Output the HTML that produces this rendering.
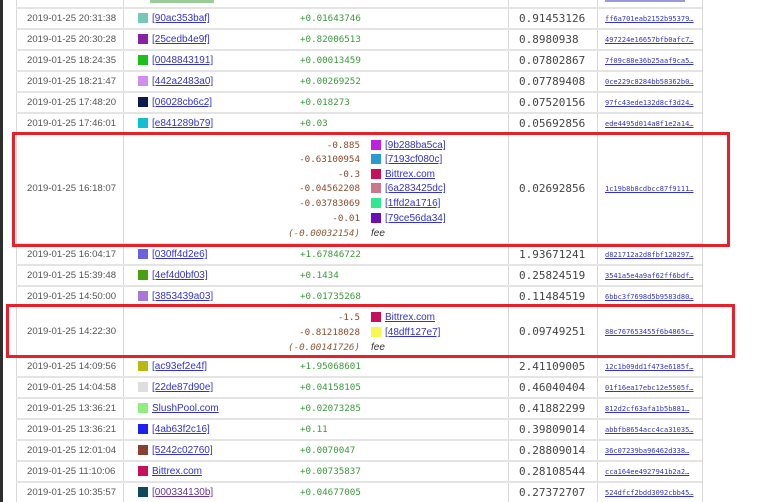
<!DOCTYPE html>
<html><head><meta charset="utf-8"><style>
*{margin:0;padding:0;box-sizing:border-box}
body{width:768px;height:502px;overflow:hidden;background:#fff;position:relative;font-family:"Liberation Sans",sans-serif}
.strip{position:absolute;left:0;top:0;width:3px;height:502px;background:#2e2e2e}
.v{position:absolute;top:0;height:502px;width:1px;background:#d8d8d8}
.h{position:absolute;left:16px;width:686px;height:2px;background:#e4e4e4}
.t{position:absolute;left:27px;font-size:9.6px;color:#555;line-height:12px}
.sq{position:absolute;width:10px;height:10px}
.a{position:absolute;font-size:10px;text-decoration:underline;line-height:12px;color:#33c}
.g{position:absolute;left:300px;font-family:"DejaVu Sans Mono","Liberation Mono",monospace;font-size:9.2px;color:#3a9a3a;line-height:12px}
.r{position:absolute;right:408px;font-family:"DejaVu Sans Mono","Liberation Mono",monospace;font-size:9.2px;color:#8b4a2a;line-height:12px;text-align:right}
.fee{position:absolute;left:371px;font-size:10px;font-style:italic;color:#333;line-height:12px}
.b{position:absolute;left:519px;font-family:"DejaVu Sans Mono","Liberation Mono",monospace;font-size:11px;color:#444;line-height:12px}
.hs{position:absolute;left:605px;font-family:"DejaVu Sans Mono","Liberation Mono",monospace;font-size:7px;color:#33c;text-decoration:underline;line-height:10px}
.red{position:absolute;border:3px solid #e8202a}
</style></head><body>
<div class="strip"></div>
<div class="v" style="left:16px"></div>
<div class="v" style="left:123px"></div>
<div class="v" style="left:508px"></div>
<div class="v" style="left:597px"></div>
<div class="v" style="left:702px"></div>
<div style="position:absolute;left:150px;top:0;width:64px;height:3px;background:#9c9"></div>
<div style="position:absolute;left:605px;top:0;width:80px;height:2px;background:#99d"></div>

<div class="h" style="top:7px"></div><div class="h" style="top:28px"></div><div class="h" style="top:49px"></div><div class="h" style="top:70px"></div><div class="h" style="top:91px"></div><div class="h" style="top:112px"></div><div class="h" style="top:133px"></div><div class="h" style="top:243px"></div><div class="h" style="top:264px"></div><div class="h" style="top:285px"></div><div class="h" style="top:305px"></div><div class="h" style="top:355px"></div><div class="h" style="top:376px"></div><div class="h" style="top:397px"></div><div class="h" style="top:418px"></div><div class="h" style="top:439px"></div><div class="h" style="top:460px"></div><div class="h" style="top:481px"></div>

<div class="t" style="top:13px">2019-01-25 20:31:38</div><div class="sq" style="left:138px;top:13px;background:#74c9b8"></div><div class="a" style="left:152px;top:13px">[90ac353baf]</div><div class="g" style="top:13px">+0.01643746</div><div class="b" style="top:13px">0.91453126</div><div class="hs" style="top:14px">ff6a701eab2152b95379…</div>
<div class="t" style="top:34px">2019-01-25 20:30:28</div><div class="sq" style="left:138px;top:34px;background:#8a1fa8"></div><div class="a" style="left:152px;top:34px">[25cedb4e9f]</div><div class="g" style="top:34px">+0.82006513</div><div class="b" style="top:34px">0.8980938</div><div class="hs" style="top:35px">497224e16657bfb0afc7…</div>
<div class="t" style="top:55px">2019-01-25 18:24:35</div><div class="sq" style="left:138px;top:55px;background:#1cc01c"></div><div class="a" style="left:152px;top:55px">[0048843191]</div><div class="g" style="top:55px">+0.00013459</div><div class="b" style="top:55px">0.07802867</div><div class="hs" style="top:56px">7f09c88e36b25aaf9ca5…</div>
<div class="t" style="top:76px">2019-01-25 18:21:47</div><div class="sq" style="left:138px;top:76px;background:#cf8ef0"></div><div class="a" style="left:152px;top:76px">[442a2483a0]</div><div class="g" style="top:76px">+0.00269252</div><div class="b" style="top:76px">0.07789408</div><div class="hs" style="top:77px">0ce229c8284bb58362b0…</div>
<div class="t" style="top:97px">2019-01-25 17:48:20</div><div class="sq" style="left:138px;top:97px;background:#0c1a50"></div><div class="a" style="left:152px;top:97px">[06028cb6c2]</div><div class="g" style="top:97px">+0.018273</div><div class="b" style="top:97px">0.07520156</div><div class="hs" style="top:98px">97fc43ede132d8cf3d24…</div>
<div class="t" style="top:118px">2019-01-25 17:46:01</div><div class="sq" style="left:138px;top:118px;background:#10c0d0"></div><div class="a" style="left:152px;top:118px">[e841289b79]</div><div class="g" style="top:118px">+0.03</div><div class="b" style="top:118px">0.05692856</div><div class="hs" style="top:119px">ede4495d014a8f1e2a14…</div>

<div class="t" style="top:183px">2019-01-25 16:18:07</div>
<div class="r" style="top:140px">-0.885</div><div class="sq" style="left:371px;top:140px;background:#c020e0"></div><div class="a" style="left:385px;top:140px">[9b288ba5ca]</div>
<div class="r" style="top:154px">-0.63100954</div><div class="sq" style="left:371px;top:154px;background:#2a9ad0"></div><div class="a" style="left:385px;top:154px">[7193cf080c]</div>
<div class="r" style="top:169px">-0.3</div><div class="sq" style="left:371px;top:169px;background:#c8105a"></div><div class="a" style="left:385px;top:169px">Bittrex.com</div>
<div class="r" style="top:183px">-0.04562208</div><div class="sq" style="left:371px;top:183px;background:#c87888"></div><div class="a" style="left:385px;top:183px">[6a283425dc]</div>
<div class="r" style="top:198px">-0.03783069</div><div class="sq" style="left:371px;top:198px;background:#30e890"></div><div class="a" style="left:385px;top:198px">[1ffd2a1716]</div>
<div class="r" style="top:213px">-0.01</div><div class="sq" style="left:371px;top:213px;background:#6a10b8"></div><div class="a" style="left:385px;top:213px">[79ce56da34]</div>
<div class="r" style="top:228px;color:#8b5a3a;font-style:italic">(-0.00032154)</div><div class="fee" style="top:228px">fee</div>
<div class="b" style="top:183px">0.02692856</div><div class="hs" style="top:184px">1c19b8b8cdbcc87f9111…</div>

<div class="t" style="top:249px">2019-01-25 16:04:17</div><div class="sq" style="left:138px;top:249px;background:#6a60e0"></div><div class="a" style="left:152px;top:249px">[030ff4d2e6]</div><div class="g" style="top:249px">+1.67846722</div><div class="b" style="top:249px">1.93671241</div><div class="hs" style="top:250px">d821712a2d8fbf120297…</div>
<div class="t" style="top:270px">2019-01-25 15:39:48</div><div class="sq" style="left:138px;top:270px;background:#48a010"></div><div class="a" style="left:152px;top:270px">[4ef4d0bf03]</div><div class="g" style="top:270px">+0.1434</div><div class="b" style="top:270px">0.25824519</div><div class="hs" style="top:271px">3541a5e4a9af62ff6bdf…</div>
<div class="t" style="top:291px">2019-01-25 14:50:00</div><div class="sq" style="left:138px;top:291px;background:#a878d8"></div><div class="a" style="left:152px;top:291px">[3853439a03]</div><div class="g" style="top:291px">+0.01735268</div><div class="b" style="top:291px">0.11484519</div><div class="hs" style="top:292px">6bbc3f7698d5b9583d80…</div>

<div class="t" style="top:326px">2019-01-25 14:22:30</div>
<div class="r" style="top:312px">-1.5</div><div class="sq" style="left:371px;top:312px;background:#c8105a"></div><div class="a" style="left:385px;top:312px">Bittrex.com</div>
<div class="r" style="top:327px">-0.81218028</div><div class="sq" style="left:371px;top:327px;background:#f8f850"></div><div class="a" style="left:385px;top:327px">[48dff127e7]</div>
<div class="r" style="top:342px;color:#8b5a3a;font-style:italic">(-0.00141726)</div><div class="fee" style="top:342px">fee</div>
<div class="b" style="top:326px">0.09749251</div><div class="hs" style="top:327px">88c767653455f6b4865c…</div>

<div class="t" style="top:361px">2019-01-25 14:09:56</div><div class="sq" style="left:138px;top:361px;background:#b8b810"></div><div class="a" style="left:152px;top:361px">[ac93ef2e4f]</div><div class="g" style="top:361px">+1.95068601</div><div class="b" style="top:361px">2.41109005</div><div class="hs" style="top:362px">12c1b09dd1f473e6185f…</div>
<div class="t" style="top:382px">2019-01-25 14:04:58</div><div class="sq" style="left:138px;top:382px;background:#dedede"></div><div class="a" style="left:152px;top:382px">[22de87d90e]</div><div class="g" style="top:382px">+0.04158105</div><div class="b" style="top:382px">0.46040404</div><div class="hs" style="top:383px">01f16ea17ebc12e5505f…</div>
<div class="t" style="top:403px">2019-01-25 13:36:21</div><div class="sq" style="left:138px;top:403px;background:#90ee80"></div><div class="a" style="left:152px;top:403px">SlushPool.com</div><div class="g" style="top:403px">+0.02073285</div><div class="b" style="top:403px">0.41882299</div><div class="hs" style="top:404px">812d2cf63afa1b5b881…</div>
<div class="t" style="top:424px">2019-01-25 13:36:21</div><div class="sq" style="left:138px;top:424px;background:#2020f0"></div><div class="a" style="left:152px;top:424px">[4ab63f2c16]</div><div class="g" style="top:424px">+0.11</div><div class="b" style="top:424px">0.39809014</div><div class="hs" style="top:425px">abbfb8654acc4ca31035…</div>
<div class="t" style="top:445px">2019-01-25 12:01:04</div><div class="sq" style="left:138px;top:445px;background:#8a4030"></div><div class="a" style="left:152px;top:445px">[5242c02760]</div><div class="g" style="top:445px">+0.0070047</div><div class="b" style="top:445px">0.28809014</div><div class="hs" style="top:446px">36c07239ba96462d338…</div>
<div class="t" style="top:466px">2019-01-25 11:10:06</div><div class="sq" style="left:138px;top:466px;background:#c8105a"></div><div class="a" style="left:152px;top:466px">Bittrex.com</div><div class="g" style="top:466px">+0.00735837</div><div class="b" style="top:466px">0.28108544</div><div class="hs" style="top:467px">cca164ee4927941b2a2…</div>
<div class="t" style="top:487px">2019-01-25 10:35:57</div><div class="sq" style="left:138px;top:487px;background:#0a4a5a"></div><div class="a" style="left:152px;top:487px;color:#639">[000334130b]</div><div class="g" style="top:487px">+0.04677005</div><div class="b" style="top:487px">0.27372707</div><div class="hs" style="top:488px">524dfcf2bdd3092cbb45…</div>

<div class="red" style="left:12px;top:132px;width:718px;height:115px"></div>
<div class="red" style="left:6px;top:304px;width:729px;height:54px"></div>
</body></html>
